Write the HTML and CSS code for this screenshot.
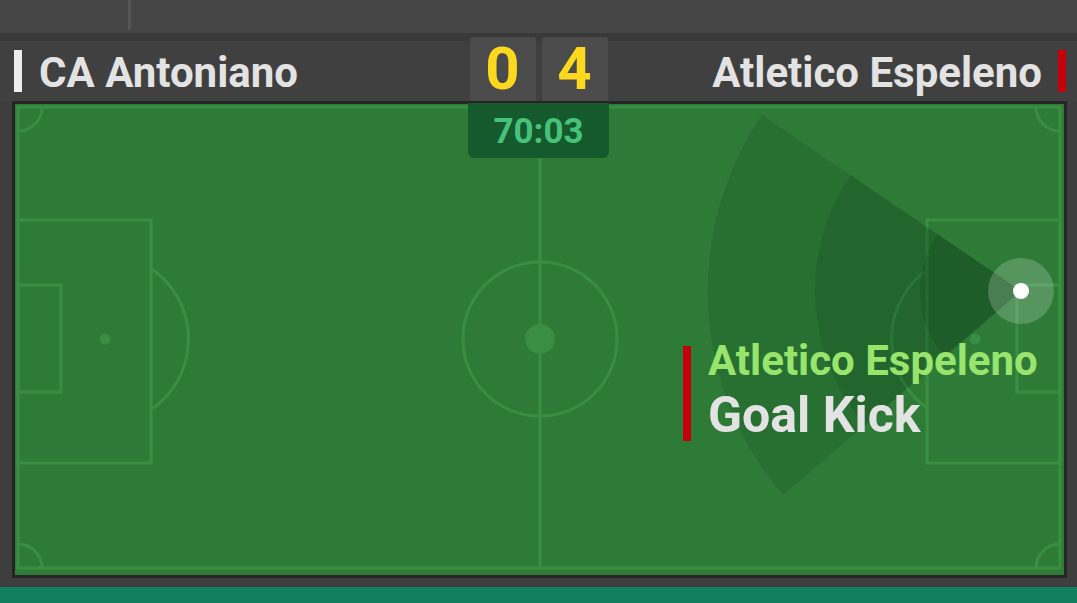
FILE: index.html
```html
<!DOCTYPE html>
<html lang="en">
<head>
<meta charset="utf-8">
<title>Match tracker</title>
<link rel="stylesheet" href="styles.css">
</head>
<body>
<div class="tracker">
  <div class="topbar"><span class="divider"></span></div>
  <div class="header">
    <div class="team team-home">
      <span class="team-bar bar-white"></span>
      <span class="team-name">CA Antoniano</span>
    </div>
    <div class="score">
      <span class="score-box">0</span>
      <span class="score-box">4</span>
    </div>
    <div class="team team-away">
      <span class="team-name">Atletico Espeleno</span>
      <span class="team-bar bar-red"></span>
    </div>
  </div>
  <div class="pitch-area">
    <div class="pitch">
      <svg class="field" width="1049" height="471" viewBox="15 104 1049 471" xmlns="http://www.w3.org/2000/svg">
        <rect x="15" y="104" width="1049" height="471" fill="#2e7b37"/>
        <g fill="none" stroke="#3a8e44" stroke-width="3">
          <rect x="18" y="107" width="1042" height="461"/>
          <line x1="540" y1="107" x2="540" y2="568"/>
          <circle cx="540" cy="339" r="77"/>
          <rect x="18" y="220" width="133" height="243"/>
          <rect x="18" y="285" width="43" height="107"/>
          <path d="M151 268.5 A85 85 0 0 1 151 409.5"/>
          <rect x="927" y="220" width="133" height="243"/>
          <rect x="1017" y="285" width="43" height="107"/>
          <path d="M927 269.9 A85 85 0 0 0 927 408.1"/>
          <path d="M42 107 A24 24 0 0 1 18 131"/>
          <path d="M18 544 A24 24 0 0 1 42 568"/>
          <path d="M1036 107 A24 24 0 0 0 1060 131"/>
          <path d="M1060 544 A24 24 0 0 0 1036 568"/>
        </g>
        <g fill="#3a8e44">
          <circle cx="540" cy="339" r="15"/>
          <circle cx="105" cy="339" r="5.5"/>
          <circle cx="975" cy="339" r="5.5"/>
        </g>
        <g fill="rgba(0,30,20,0.12)">
          <path d="M1021 291 L762 115 A313 313 0 0 0 783 495 Z"/>
          <path d="M1021 291 L850.5 175.2 A206 206 0 0 0 864.6 425 Z"/>
          <path d="M1021 291 L937.4 234.2 A101 101 0 0 0 944.3 356.7 Z"/>
        </g>
        <circle cx="1021" cy="291" r="33" fill="rgba(255,255,255,0.2)"/>
        <circle cx="1021" cy="291" r="8" fill="#ffffff"/>
      </svg>
      <div class="timer">70:03</div>
      <div class="event">
        <span class="event-bar"></span>
        <div class="event-text">
          <div class="event-team">Atletico Espeleno</div>
          <div class="event-type">Goal Kick</div>
        </div>
      </div>
    </div>
  </div>
  <div class="footer"></div>
</div>
</body>
</html>
```
FILE: styles.css
```css
* { box-sizing: border-box; }
html, body {
  margin: 0;
  padding: 0;
  background: #3e3e3e;
  font-family: Roboto, "Liberation Sans", sans-serif;
}
.tracker {
  width: 1077px;
  height: 603px;
  display: flex;
  flex-direction: column;
  background: #3e3e3e;
}
.topbar {
  height: 33px;
  background: #464646;
  padding-left: 128px;
  display: flex;
}
.divider {
  width: 3px;
  height: 30px;
  background: #555555;
}
.header {
  height: 68px;
  background: linear-gradient(#393939 0, #393939 8px, #404040 8px);
  display: grid;
  grid-template-columns: 1fr auto 1fr;
}
.team {
  display: flex;
  align-items: center;
  padding-top: 8px;
  color: #e3e3e3;
}
.team-home {
  padding-left: 14px;
  gap: 17px;
}
.team-away {
  justify-content: flex-end;
  padding-right: 11px;
  gap: 16px;
}
.team-bar {
  width: 8px;
  height: 42px;
}
.bar-white { background: #eeeeee; }
.bar-red { background: #c3000c; }
.team-name {
  font-size: 42px;
  font-weight: 700;
  line-height: 1;
  white-space: nowrap;
  padding-top: 3px;
}
.score {
  padding-top: 4px;
  display: flex;
  gap: 6px;
}
.score-box {
  width: 66px;
  height: 64px;
  background: #4b4b4b;
  border-radius: 3px 3px 0 0;
  color: #fcd91e;
  font-size: 60px;
  font-weight: 700;
  line-height: 64px;
  text-align: center;
}
.pitch-area {
  padding-left: 12px;
}
.pitch {
  position: relative;
  width: 1055px;
  height: 477px;
  border: 3px solid #252525;
  background: #2e7b37;
}
.field {
  display: block;
}
.timer {
  position: absolute;
  top: -1px;
  left: 453px;
  width: 141px;
  height: 55px;
  background: #145a2c;
  border-radius: 0 0 6px 6px;
  color: #46c27b;
  font-size: 35px;
  font-weight: 700;
  line-height: 57px;
  text-align: center;
}
.event {
  position: absolute;
  left: 668px;
  top: 235px;
  display: flex;
  align-items: center;
  gap: 17px;
}
.event-bar {
  width: 8px;
  height: 95px;
  background: #c3000c;
}
.event-team {
  color: #98e46c;
  font-size: 42px;
  font-weight: 700;
  line-height: 44px;
  white-space: nowrap;
}
.event-type {
  color: #e3e3e3;
  font-size: 50px;
  font-weight: 700;
  line-height: 64px;
  white-space: nowrap;
}
.footer {
  margin-top: 9px;
  flex: 1;
  background: #12805e;
}
```
